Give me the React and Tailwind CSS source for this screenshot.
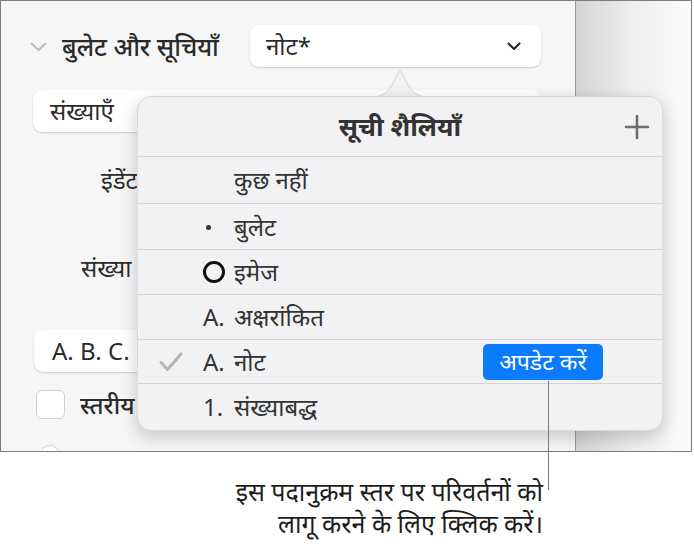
import React from "react";

const rows = [
  { h: "h-[47px]", mark: null, text: "कुछ नहीं" },
  { h: "h-[46px]", mark: "dot", text: "बुलेट" },
  { h: "h-[45px]", mark: "ring", text: "इमेज" },
  { h: "h-[45px]", mark: "A.", text: "अक्षरांकित" },
  { h: "h-[44px]", mark: "A.", text: "नोट", checked: true, update: true },
  { h: "h-[46px]", mark: "1.", text: "संख्याबद्ध", last: true },
];

const Marker = ({ mark }) => {
  if (mark === "dot") return <span className="ml-[3px] mt-[2px] block h-[5px] w-[5px] rounded-full bg-[#333]" />;
  if (mark === "ring") return <span className="block h-[22px] w-[22px] rounded-full border-[3px] border-[#111]" />;
  if (mark) return <span>{mark}</span>;
  return null;
};

export default function App() {
  return (
    <div className="relative h-[547px] w-[694px] overflow-hidden bg-white font-['Noto_Sans',sans-serif] text-[#2b2b2b]">
      {/* screenshot frame */}
      <div className="flex h-[452px] w-[692px] border border-[#7c7c7c]">
        <div className="w-[575px] shrink-0 overflow-hidden border-r border-[#9a9a9a] bg-[#f6f6f6]">
          <div className="flex items-center pl-[29px] pt-[24px]">
            <svg width="17" height="10" viewBox="0 0 17 10" className="mt-[2px]">
              <path d="M1.5 1.5 L8.5 8 L15.5 1.5" fill="none" stroke="#b9b9b9" strokeWidth="1.8" strokeLinecap="round" />
            </svg>
            <span className="ml-[15px] text-[25px] font-medium leading-[30px] text-[#2a2a2a]">बुलेट और सूचियाँ</span>
            <div className="ml-auto mr-[34px] flex h-[42px] w-[291px] items-center rounded-[9px] bg-white pl-[16px] pr-[20px] text-[24px] shadow-[0_1px_2px_rgba(0,0,0,0.18)]">
              <span>नोट*</span>
              <svg width="14" height="9" viewBox="0 0 14 9" className="ml-auto">
                <path d="M1.5 1.5 L7 7 L12.5 1.5" fill="none" stroke="#222" strokeWidth="2" strokeLinecap="round" strokeLinejoin="round" />
              </svg>
            </div>
          </div>

          <div className="ml-[32px] mt-[23px] flex h-[42px] w-[508px] items-center rounded-[9px] bg-white pl-[17px] pr-[7px] text-[24px] shadow-[0_1px_2px_rgba(0,0,0,0.18)]">
            <span>संख्याएँ</span>
            <span className="ml-auto h-[28px] w-[30px] rounded-[7px] bg-[#1a7cf5]" />
          </div>

          <div className="ml-[100px] mt-[34px] text-[24px] leading-[28px]">इंडेंट</div>
          <div className="ml-[80px] mt-[60px] text-[24px] leading-[28px]">संख्या</div>

          <div className="ml-[33px] mt-[48px] flex h-[42px] w-[300px] items-center rounded-[9px] bg-white pl-[18px] text-[24px] shadow-[0_1px_2px_rgba(0,0,0,0.18)]">
            A. B. C.
          </div>

          <div className="ml-[35px] mt-[18px] flex h-[29px] items-center gap-[15px]">
            <span className="block h-[29px] w-[29px] rounded-[6px] border border-[#cfcfcf] bg-white" />
            <span className="text-[24px] font-medium leading-[28px]">स्तरीय</span>
          </div>
          <div className="ml-[39px] mt-[26px] h-[20px] w-[20px] rounded-full border border-[#cfcfcf] bg-white" />
        </div>
        <div className="flex-1 bg-gradient-to-r from-[#d4d4d4] via-[#efefef] to-[#fbfbfb]" />
      </div>

      {/* popover arrow */}
      <svg width="64" height="30" viewBox="0 0 64 30" className="absolute left-[368px] top-[68px]">
        <path d="M0 29 C14 29 18 26 24 17 L30 5 Q32 1 34 5 L40 17 C46 26 50 29 64 29" fill="#f2f2f4" stroke="#d6d6d8" strokeWidth="1" />
      </svg>

      {/* list styles popup */}
      <div className="absolute left-[137px] top-[96px] w-[526px] overflow-hidden rounded-[14px] border border-[#d9d9db] bg-[#f2f2f4] shadow-[0_6px_18px_rgba(0,0,0,0.2)]">
        <div className="relative flex h-[60px] items-center justify-center border-b border-[#d4d4d6]">
          <span className="text-[26px] font-bold text-[#333]">सूची शैलियाँ</span>
          <svg width="26" height="26" viewBox="0 0 26 26" className="absolute right-[12px] top-[17px]">
            <path d="M13 2 V24 M2 13 H24" stroke="#6e6e6e" strokeWidth="2.6" strokeLinecap="round" />
          </svg>
        </div>
        {rows.map((r) => (
          <div key={r.text} className={`${r.h} flex items-center text-[24px] text-[#333] ${r.last ? "" : "border-b border-[#d4d4d6]"}`}>
            <span className="flex w-[65px] justify-end pr-[20px]">
              {r.checked && (
                <svg width="24" height="20" viewBox="0 0 24 20">
                  <path d="M2 10.5 L8.5 17.5 L22 2" fill="none" stroke="#b4b4b4" strokeWidth="3" strokeLinecap="round" strokeLinejoin="round" />
                </svg>
              )}
            </span>
            <span className="flex w-[31px] items-center">
              <Marker mark={r.mark} />
            </span>
            <span>{r.text}</span>
            {r.update && (
              <span className="ml-auto mr-[59px] flex h-[36px] w-[120px] items-center justify-center rounded-[5px] bg-[#0a7bfd] text-[23px] text-white">
                अपडेट करें
              </span>
            )}
          </div>
        ))}
      </div>

      {/* leader line */}
      <div className="absolute left-[548px] top-[381px] h-[109px] w-px bg-[#7a7a7a]" />

      {/* caption */}
      <div className="mt-[23px] pr-[151px] text-right text-[25px] leading-[32px] text-[#1d1d1d]">
        <div>इस पदानुक्रम स्तर पर परिवर्तनों को</div>
        <div>लागू करने के लिए क्लिक करें।</div>
      </div>
    </div>
  );
}
